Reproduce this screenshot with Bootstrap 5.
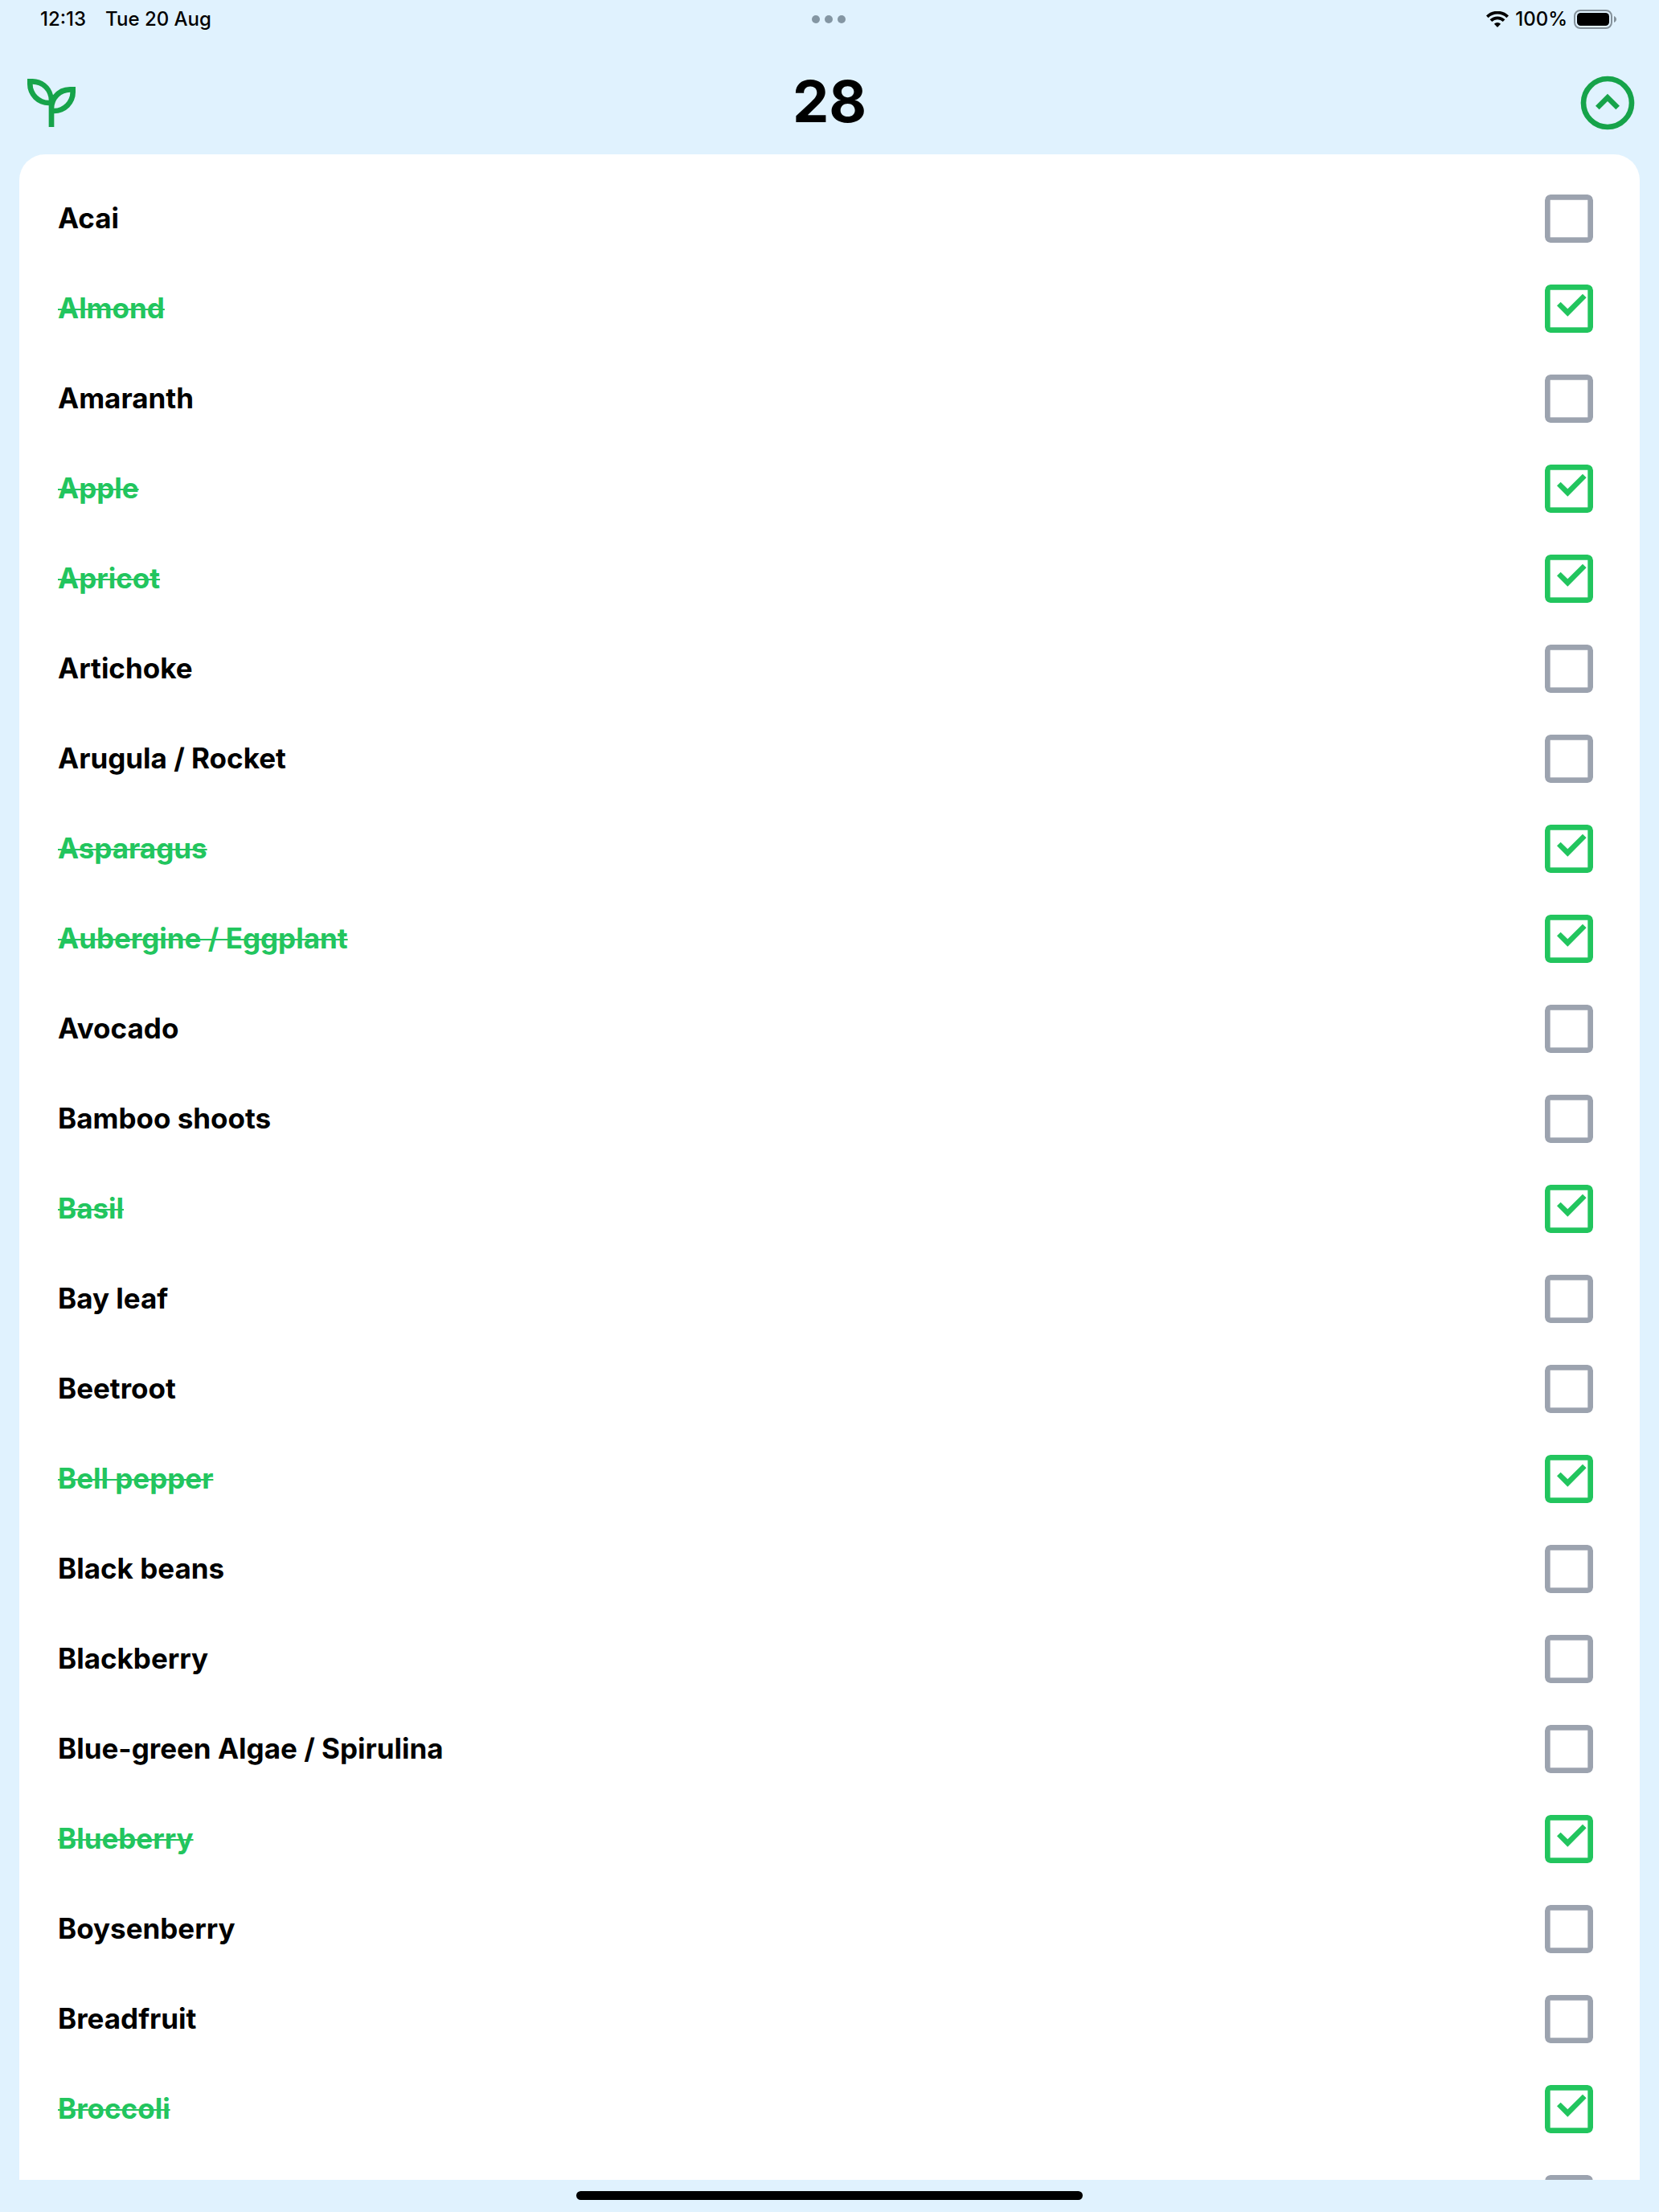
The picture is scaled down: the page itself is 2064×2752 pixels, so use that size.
<!DOCTYPE html>
<html lang="en">
<head>
<meta charset="utf-8">
<meta name="viewport" content="width=device-width, initial-scale=1">
<title>Plant checklist</title>
<link href="https://cdn.jsdelivr.net/npm/bootstrap@5.3.0/dist/css/bootstrap.min.css" rel="stylesheet">
<style>
  body { background: #e0f2fe; color: #000; font-family: Inter, "Liberation Sans", sans-serif; }
  .status-bar { height: 48px; padding: 0 52px 0 50px; font-size: 24px; font-weight: 500; line-height: 48px; }
  .status-side { flex: 1 1 0; }
  .status-dots { gap: 6px; }
  .status-dots i { width: 10px; height: 10px; background: #8496a3; }
  .app-header { padding: 40px 24px 24px; }
  .icon-btn { width: 80px; height: 80px; color: #16a34a; line-height: 1; }
  .plant-count { font-size: 72px; font-weight: 700; line-height: 76px; }
  .plant-sheet { margin: 0 24px; padding: 24px 48px 0; border-radius: 32px 32px 0 0; min-height: 0; scrollbar-width: none; }
  .plant-sheet::-webkit-scrollbar { display: none; }
  .plant-row { height: 112px; }
  .plant-row label { font-size: 35px; font-weight: 700; line-height: 44px; padding-bottom: 2px; }
  .plant-row:has(:checked) label { color: #22c55e; text-decoration: line-through; text-decoration-thickness: 2px; text-decoration-skip-ink: none; }
  .plant-row .form-check-input {
    width: 60px; height: 60px; margin: 0 10px; border: 0; border-radius: 7px; background-color: #fff; background-size: 60px 60px;
    background-image: url("data:image/svg+xml,%3Csvg xmlns='http://www.w3.org/2000/svg' viewBox='3 3 18 18'%3E%3Cpath fill='%239ca3af' fill-rule='evenodd' d='M5 3h14a2 2 0 0 1 2 2v14a2 2 0 0 1-2 2H5a2 2 0 0 1-2-2V5a2 2 0 0 1 2-2zM5 5v14h14V5z'/%3E%3C/svg%3E");
  }
  .plant-row .form-check-input:checked {
    background-color: #fff;
    background-image: url("data:image/svg+xml,%3Csvg xmlns='http://www.w3.org/2000/svg' viewBox='3 3 18 18'%3E%3Cpath fill='%2322c55e' fill-rule='evenodd' d='M5 3h14a2 2 0 0 1 2 2v14a2 2 0 0 1-2 2H5a2 2 0 0 1-2-2V5a2 2 0 0 1 2-2zM5 5v14h14V5zM7.5 10.9l1.4-1.4 2.6 2.6 5.6-5.6 1.4 1.4-7 7z'/%3E%3C/svg%3E");
  }
  .home-area { height: 40px; padding-top: 14px; }
  .home-bar { width: 630px; max-width: 60%; height: 11px; background: #000; }
</style>
</head>
<body class="vh-100 d-flex flex-column overflow-hidden">
<div class="status-bar d-flex align-items-center flex-shrink-0">
  <div class="status-side d-flex gap-4"><span>12:13</span><span>Tue 20 Aug</span></div>
  <div class="status-dots d-flex"><i class="rounded-circle"></i><i class="rounded-circle"></i><i class="rounded-circle"></i></div>
  <div class="status-side d-flex align-items-center justify-content-end gap-2">
    <svg width="28" height="20" viewBox="0 0 28 20" aria-hidden="true"><g fill="none" stroke="#000" stroke-width="3.8"><path d="M1.3 6.8a18.2 18.2 0 0 1 25.4 0"/><path d="M5.9 11.6a11.6 11.6 0 0 1 16.2 0"/></g><path d="M14 20l-4.1-4.2a5.8 5.8 0 0 1 8.2 0z"/></svg>
    <span>100%</span>
    <svg width="54" height="24" viewBox="0 0 54 24" aria-hidden="true"><rect x="1" y="1" width="46" height="22" rx="7" fill="none" stroke="#84919a" stroke-width="2"/><rect x="4" y="4" width="40" height="16" rx="4.5"/><path fill="#84919a" d="M50 8c4 1.500 4 6.500 0 8z"/></svg>
  </div>
</div>
<header class="app-header d-flex justify-content-between align-items-start flex-shrink-0">
  <button type="button" class="icon-btn btn border-0 p-0" aria-label="Plants">
    <svg width="80" height="80" viewBox="0 0 24 24" fill="currentColor" fill-rule="evenodd"><path d="M3 3h2a8 8 0 0 1 7.600 6.100A8 8 0 0 1 19 6h2v2a8 8 0 0 1-8 8v5h-2v-8a8 8 0 0 1-8-8zM5 5a6 6 0 0 0 6 6 6 6 0 0 0-6-6zM19 8a6 6 0 0 0-6 6 6 6 0 0 0 6-6z"/></svg>
  </button>
  <h1 class="plant-count m-0">28</h1>
  <button type="button" class="icon-btn btn border-0 p-0" aria-label="Collapse">
    <svg width="80" height="80" viewBox="0 0 24 24" fill="currentColor"><circle cx="12" cy="12" r="9" fill="none" stroke="currentColor" stroke-width="2"/><path d="M12 8.600L7.500 13.100l1.400 1.400 3.100-3.100 3.100 3.100 1.400-1.400z"/></svg>
  </button>
</header>
<main class="plant-sheet bg-white flex-grow-1 overflow-auto">
  <ul class="list-unstyled m-0">
    <li class="plant-row d-flex align-items-center justify-content-between"><label for="p1">Acai</label><input class="form-check-input" type="checkbox" id="p1"></li>
    <li class="plant-row d-flex align-items-center justify-content-between"><label for="p2">Almond</label><input class="form-check-input" type="checkbox" id="p2" checked></li>
    <li class="plant-row d-flex align-items-center justify-content-between"><label for="p3">Amaranth</label><input class="form-check-input" type="checkbox" id="p3"></li>
    <li class="plant-row d-flex align-items-center justify-content-between"><label for="p4">Apple</label><input class="form-check-input" type="checkbox" id="p4" checked></li>
    <li class="plant-row d-flex align-items-center justify-content-between"><label for="p5">Apricot</label><input class="form-check-input" type="checkbox" id="p5" checked></li>
    <li class="plant-row d-flex align-items-center justify-content-between"><label for="p6">Artichoke</label><input class="form-check-input" type="checkbox" id="p6"></li>
    <li class="plant-row d-flex align-items-center justify-content-between"><label for="p7">Arugula / Rocket</label><input class="form-check-input" type="checkbox" id="p7"></li>
    <li class="plant-row d-flex align-items-center justify-content-between"><label for="p8">Asparagus</label><input class="form-check-input" type="checkbox" id="p8" checked></li>
    <li class="plant-row d-flex align-items-center justify-content-between"><label for="p9">Aubergine / Eggplant</label><input class="form-check-input" type="checkbox" id="p9" checked></li>
    <li class="plant-row d-flex align-items-center justify-content-between"><label for="p10">Avocado</label><input class="form-check-input" type="checkbox" id="p10"></li>
    <li class="plant-row d-flex align-items-center justify-content-between"><label for="p11">Bamboo shoots</label><input class="form-check-input" type="checkbox" id="p11"></li>
    <li class="plant-row d-flex align-items-center justify-content-between"><label for="p12">Basil</label><input class="form-check-input" type="checkbox" id="p12" checked></li>
    <li class="plant-row d-flex align-items-center justify-content-between"><label for="p13">Bay leaf</label><input class="form-check-input" type="checkbox" id="p13"></li>
    <li class="plant-row d-flex align-items-center justify-content-between"><label for="p14">Beetroot</label><input class="form-check-input" type="checkbox" id="p14"></li>
    <li class="plant-row d-flex align-items-center justify-content-between"><label for="p15">Bell pepper</label><input class="form-check-input" type="checkbox" id="p15" checked></li>
    <li class="plant-row d-flex align-items-center justify-content-between"><label for="p16">Black beans</label><input class="form-check-input" type="checkbox" id="p16"></li>
    <li class="plant-row d-flex align-items-center justify-content-between"><label for="p17">Blackberry</label><input class="form-check-input" type="checkbox" id="p17"></li>
    <li class="plant-row d-flex align-items-center justify-content-between"><label for="p18">Blue-green Algae / Spirulina</label><input class="form-check-input" type="checkbox" id="p18"></li>
    <li class="plant-row d-flex align-items-center justify-content-between"><label for="p19">Blueberry</label><input class="form-check-input" type="checkbox" id="p19" checked></li>
    <li class="plant-row d-flex align-items-center justify-content-between"><label for="p20">Boysenberry</label><input class="form-check-input" type="checkbox" id="p20"></li>
    <li class="plant-row d-flex align-items-center justify-content-between"><label for="p21">Breadfruit</label><input class="form-check-input" type="checkbox" id="p21"></li>
    <li class="plant-row d-flex align-items-center justify-content-between"><label for="p22">Broccoli</label><input class="form-check-input" type="checkbox" id="p22" checked></li>
    <li class="plant-row d-flex align-items-center justify-content-end"><input class="form-check-input" type="checkbox" id="p23" aria-label="Brussels sprouts"></li>
  </ul>
</main>
<footer class="home-area flex-shrink-0"><div class="home-bar rounded-pill mx-auto"></div></footer>
<script src="https://cdn.jsdelivr.net/npm/bootstrap@5.3.0/dist/js/bootstrap.bundle.min.js"></script>
</body>
</html>
